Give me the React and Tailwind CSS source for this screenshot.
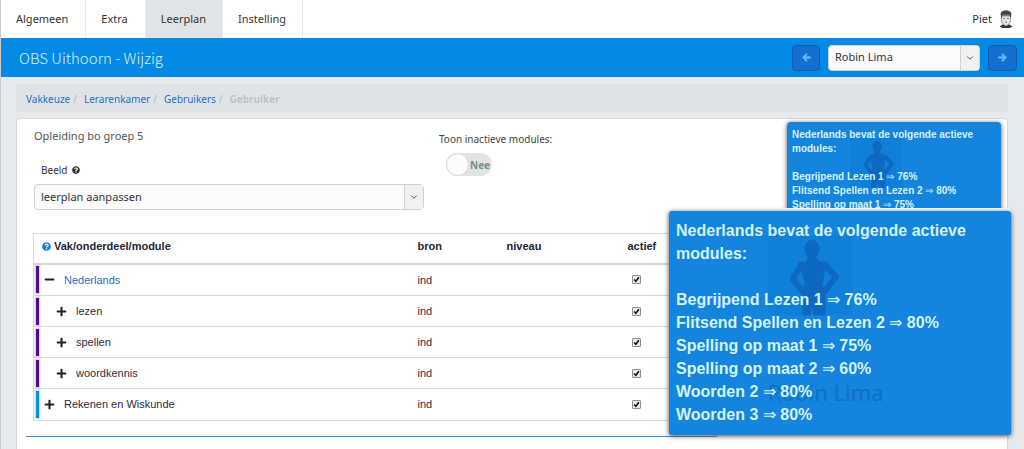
import { FaArrowLeft, FaArrowRight, FaPlus, FaMinus, FaQuestionCircle } from "react-icons/fa";
import { ChevronDown } from "lucide-react";

const tabs = ["Algemeen", "Extra", "Leerplan", "Instelling"];

const rows = [
  { name: "Nederlands", level: 0, open: true, link: true, bar: "bg-[#4b0f8c] shadow-[0_0_2px_1px_#d9b8ee]" },
  { name: "lezen", level: 1, bar: "bg-[#4b0f8c] shadow-[0_0_2px_1px_#d9b8ee]" },
  { name: "spellen", level: 1, bar: "bg-[#4b0f8c] shadow-[0_0_2px_1px_#d9b8ee]" },
  { name: "woordkennis", level: 1, bar: "bg-[#4b0f8c] shadow-[0_0_2px_1px_#d9b8ee]" },
  { name: "Rekenen en Wiskunde", level: 0, bar: "bg-[#0c8ce0] shadow-[0_0_2px_1px_#a5e4fb]" },
];

const modules = [
  ["Begrijpend Lezen 1", 76],
  ["Flitsend Spellen en Lezen 2", 80],
  ["Spelling op maat 1", 75],
  ["Spelling op maat 2", 60],
  ["Woorden 2", 80],
  ["Woorden 3", 80],
];

function Figure({ className }) {
  return (
    <svg viewBox="0 0 84 84" className={className} aria-hidden="true">
      <rect width="84" height="80" fill="#107fd7" />
      <g fill="#0d69c0" stroke="#0d69c0" strokeLinejoin="round" strokeLinecap="round">
        <ellipse cx="44" cy="14" rx="7" ry="9" />
        <path d="M40 22h8l2 4 8 3-4 20 3 8v23H46l-2-12-2 12H35V57l2-9-5-19 7-3z" strokeWidth="1" />
        <path d="M33 30L25 44l10 13" fill="none" strokeWidth="6" />
        <path d="M57 30l11 12-11 14" fill="none" strokeWidth="6" />
      </g>
    </svg>
  );
}

function ModuleText({ items }) {
  return (
    <>
      <p>Nederlands bevat de volgende actieve modules:</p>
      <br />
      <ul>
        {items.map(([name, score]) => (
          <li key={name}>
            {name} <span className="font-normal">⇒</span> {score}%
          </li>
        ))}
      </ul>
    </>
  );
}

function Select({ id, label, value, className, options }) {
  return (
    <div className={`relative flex h-[26px] ${className}`}>
      <select
        id={id}
        aria-label={label}
        defaultValue={value}
        className="w-full appearance-none rounded-sm border border-[#d0d0d0] bg-[#fbfbfb] pl-1.5 text-[11px] text-[#333]"
      >
        {options.map((o) => (
          <option key={o}>{o}</option>
        ))}
      </select>
      <span className="pointer-events-none absolute inset-y-px right-px flex w-[19px] items-center justify-center border-l border-[#d0d0d0] bg-[#f1f1f1]">
        <ChevronDown className="size-2.5 text-[#333]" strokeWidth={2} />
      </span>
    </div>
  );
}

function Mark({ label }) {
  return (
    <input
      type="checkbox"
      defaultChecked
      aria-label={label}
      className="block size-[9px] appearance-none rounded-[1px] border border-[#8f8f8f] bg-[#e8e8e8] bg-[url('data:image/svg+xml,%3Csvg%20xmlns=%22http://www.w3.org/2000/svg%22%20viewBox=%220%200%208%208%22%3E%3Cpath%20d=%22M1.3%204l2%202L6.7%201.5%22%20fill=%22none%22%20stroke=%22%23111%22%20stroke-width=%221.8%22/%3E%3C/svg%3E')] bg-no-repeat"
    />
  );
}

export default function App() {
  return (
    <div className="relative flex min-h-screen flex-col overflow-hidden border-l border-[#c9cdd0] bg-[#e6eaec] font-['Noto_Sans',sans-serif] text-[#333]">
      <header className="flex h-[38px] items-stretch bg-white text-[11px]">
        <nav className="flex">
          {tabs.map((t) => (
            <a
              key={t}
              href="#"
              className={`flex items-center border-r border-[#eaeaea] px-[15px] last:pr-4 ${t === "Leerplan" ? "bg-[#e0e4e8] pr-4" : "pr-[17px]"}`}
            >
              {t}
            </a>
          ))}
        </nav>
        <div className="ml-auto flex items-center gap-1.5 pr-2.5">
          Piet
          <svg viewBox="0 0 16 20" className="h-[20px] w-[16px]" aria-hidden="true">
            <path d="M1.500 17.500l4-2.500 2.500 2 2.500-2 4 2.500-3 1.500h-7z" fill="#333" />
            <path d="M3.500 7h9v4c0 3-2.500 5.500-4.500 5.500S3.500 14 3.500 11z" fill="#e6e6e6" stroke="#888" strokeWidth=".8" />
            <path d="M2.500 5c1-5 10-5 11 0l-1 4-1-2h-7l-1 2z" fill="#444" />
            <path d="M4.500 6.200h7" stroke="#bbb" strokeWidth=".8" />
            <path d="M5 9.500h2M9 9.500h2M7 13h2" stroke="#777" />
          </svg>
        </div>
      </header>

      <div className="flex h-[39px] items-center bg-[#028ae4] px-[18px] pr-[7px]">
        <h1 className="font-['Noto_Sans_CJK_JP','Noto_Sans',sans-serif] text-[15px] leading-6 font-light text-[#d5f1ff]">OBS Uithoorn - Wijzig</h1>
        <div className="ml-auto flex items-center gap-2">
          <button aria-label="Vorige" className="flex h-[26px] w-7 items-center justify-center rounded-sm border border-[#0d5cb4] bg-[#156fd0] text-[#54c4fb]">
            <FaArrowLeft className="size-[9px] stroke-current stroke-[40]" />
          </button>
          <Select label="Leerling" value="Robin Lima" options={["Robin Lima"]} className="w-[152px]" />
          <button aria-label="Volgende" className="flex h-[26px] w-[29px] items-center justify-center rounded-sm border border-[#0d5cb4] bg-[#156fd0] text-[#54c4fb]">
            <FaArrowRight className="size-[9px] stroke-current stroke-[40]" />
          </button>
        </div>
      </div>

      <main className="flex flex-1 flex-col pt-[7px] pr-4 pl-[15px]">
        <nav className="flex h-7 items-center bg-[#dfe3e7] px-2.5 pt-[3px] text-[10px] text-[#1f6fc4]" aria-label="Kruimelpad">
          {["Vakkeuze", "Lerarenkamer", "Gebruikers"].map((t) => (
            <span key={t} className="flex">
              <a href="#">{t}</a>
              <span className="pr-[7px] pl-[3px] text-[#b5babd]">/</span>
            </span>
          ))}
          <span className="font-bold text-[#bcc3c6]">Gebruiker</span>
        </nav>

        <section className="mt-1.5 flex flex-1 rounded-t-sm border border-b-0 border-[#d5d9db] bg-white pl-[9px]">
          <div className="w-[691px] pt-2">
            <div className="flex px-2">
              <div className="w-[390px]">
                <h2 className="text-[11px] leading-[18px] text-[#555]">Opleiding bo groep 5</h2>
                <label htmlFor="beeld" className="mt-4 mb-[5px] ml-[7px] flex items-center gap-1 text-[10px] leading-[18px]">
                  Beeld <FaQuestionCircle className="size-2" />
                </label>
                <Select id="beeld" value="leerplan aanpassen" options={["leerplan aanpassen"]} className="w-full" />
              </div>
              <div className="ml-[15px] pt-1 text-[10px] leading-[16px] text-[#444]">
                <label htmlFor="inactief">Toon inactieve modules:</label>
                <button id="inactief" role="switch" aria-checked="false" className="mt-1.5 ml-[7px] flex h-[23px] w-[46px] items-center gap-px rounded-full bg-[#dfe5e4] font-bold text-[#75908a]">
                  <span className="size-[23px] shrink-0 rounded-full border border-[#d3dad9] bg-[#fbfdfd]" />
                  Nee
                </button>
              </div>
            </div>

            <table className="mx-[7px] mt-[23px] w-[677px] table-fixed border border-[#d8d8d8] font-['Liberation_Sans',sans-serif] text-[11px] text-[#2d2d40]">
              <thead>
                <tr className="h-[30px] border-b-2 border-[#d8d8d8] text-left text-[#1f1f35]">
                  <th className="w-[384px] pb-1 pl-2">
                    <span className="flex items-center gap-[3px]">
                      <FaQuestionCircle className="size-[9px] text-[#0c7fd6]" />
                      Vak/onderdeel/module
                    </span>
                  </th>
                  <th className="w-[89px] pb-1">bron</th>
                  <th className="w-[121px] pb-1">niveau</th>
                  <th className="pb-1">actief</th>
                </tr>
              </thead>
              <tbody>
                {rows.map((r) => (
                  <tr key={r.name} className={`border-b border-[#d8d8d8] ${r.level ? "h-[31px]" : "h-8"}`}>
                    <td>
                      <div className="flex items-center gap-[9px]">
                        <span className={`ml-0.5 h-[27px] w-[3px] ${r.bar}`} />
                        <button aria-label={r.open ? "Inklappen" : "Uitklappen"} className={r.level ? "ml-2 text-[#222]" : "-ml-1 text-[#222]"}>
                          {r.open ? <FaMinus className="size-[11px]" /> : <FaPlus className="size-[11px]" />}
                        </button>
                        {r.link ? <a href="#" className="text-[#1f6fc4]">{r.name}</a> : <span>{r.name}</span>}
                      </div>
                    </td>
                    <td>ind</td>
                    <td />
                    <td className="pl-1">
                      <Mark label={r.name} />
                    </td>
                  </tr>
                ))}
              </tbody>
            </table>
            <hr className="mt-[15px] h-px border-0 bg-[#3d8fd0]" />
          </div>
        </section>
      </main>

      <aside className="absolute top-[122px] right-[23px] h-[92px] w-[214px] rounded-sm bg-[#1484dc] px-[5px] pt-1.5 font-['Liberation_Sans',sans-serif] text-[10px] leading-[14px] font-bold text-[#d3f3ff] shadow-[0_1px_5px_#555]">
        <Figure className="absolute top-4 left-[63px] h-[52px] w-[52px]" />
        <div className="relative">
          <ModuleText items={modules.slice(0, 3)} />
        </div>
      </aside>

      <aside className="absolute top-[211px] right-[13px] h-[224px] w-[342px] rounded-[3px] bg-[#1484dc] px-[7px] pt-2 font-['Liberation_Sans',sans-serif] text-[16px] leading-[23px] font-bold text-[#d3f3ff] shadow-[0_1px_5px_#444,0_-3px_0_#fff]">
        <Figure className="absolute top-6 left-[99px] h-[84px] w-[84px]" />
        <span className="absolute top-[170px] left-[99px] font-['Noto_Sans',sans-serif] text-[22px] font-normal text-[#1070c2]">Robin Lima</span>
        <div className="relative">
          <ModuleText items={modules} />
        </div>
      </aside>
    </div>
  );
}
